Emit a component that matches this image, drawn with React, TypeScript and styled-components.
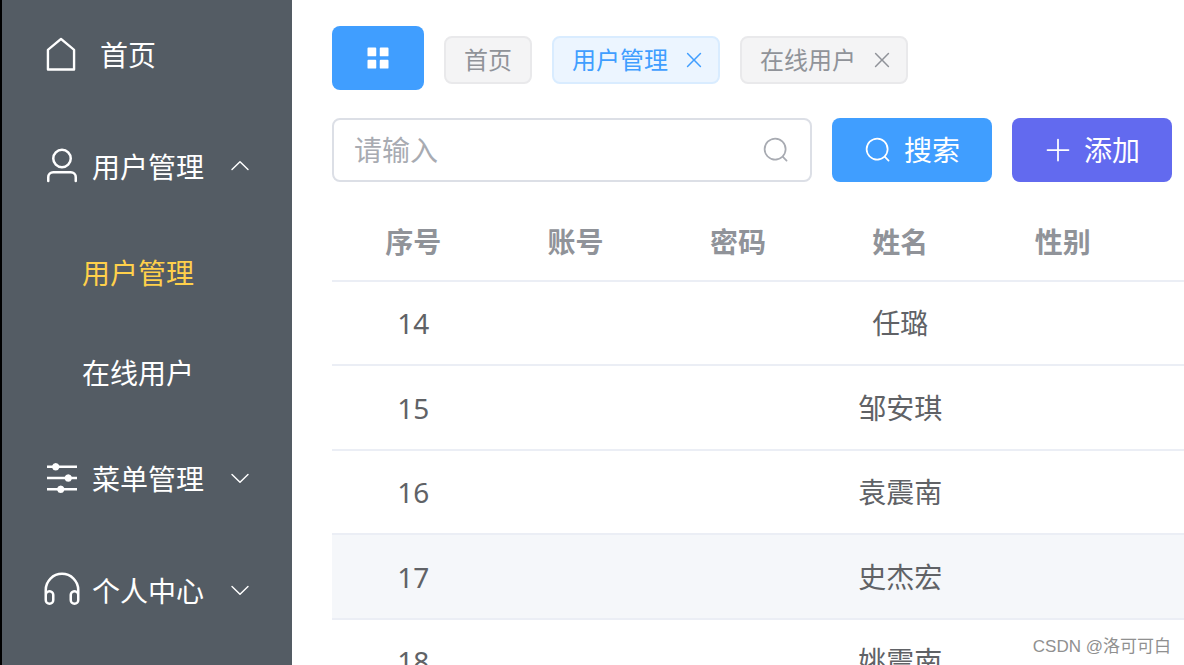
import React from "react";
import styled, { createGlobalStyle } from "styled-components";

const GlobalStyle = createGlobalStyle`
  *, *::before, *::after { box-sizing: border-box; }
  body {
    margin: 0;
    background: #fff;
    color: #606266;
    font-family: "Noto Sans", "Noto Sans CJK SC", sans-serif;
    font-size: 28px;
    line-height: 40px;
  }
  button, input { font: inherit; }
`;

const paths = {
  house:
    "M192 413.952V896h640V413.952L512 147.328 192 413.952zM139.52 374.4l352-293.312a32 32 0 0 1 40.96 0l352 293.312A32 32 0 0 1 896 398.976V928a32 32 0 0 1-32 32H160a32 32 0 0 1-32-32V398.976a32 32 0 0 1 11.52-24.576z",
  user:
    "M512 512a192 192 0 1 0 0-384 192 192 0 0 0 0 384zm0 64a256 256 0 1 1 0-512 256 256 0 0 1 0 512zm320 320v-96a96 96 0 0 0-96-96H288a96 96 0 0 0-96 96v96a32 32 0 1 1-64 0v-96a160 160 0 0 1 160-160h448a160 160 0 0 1 160 160v96a32 32 0 1 1-64 0z",
  operation:
    "M389.44 768a96.064 96.064 0 0 1 181.12 0H896v64H570.56a96.064 96.064 0 0 1-181.12 0H128v-64h261.44zm192-288a96.064 96.064 0 0 1 181.12 0H896v64H762.56a96.064 96.064 0 0 1-181.12 0H128v-64h453.44zm-320-288a96.064 96.064 0 0 1 181.12 0H896v64H442.56a96.064 96.064 0 0 1-181.12 0H128v-64h133.44z",
  headset:
    "M896 529.152V512a384 384 0 1 0-768 0v17.152A128 128 0 0 1 320 640v128a128 128 0 1 1-256 0V512a448 448 0 1 1 896 0v256a128 128 0 1 1-256 0V640a128 128 0 0 1 192-110.848zM896 640a64 64 0 0 0-128 0v128a64 64 0 0 0 128 0V640zm-768 0v128a64 64 0 0 0 128 0V640a64 64 0 1 0-128 0z",
  arrowDown:
    "M831.872 340.864 512 652.672 192.128 340.864a30.592 30.592 0 0 0-42.752 0 29.12 29.12 0 0 0 0 41.6L489.664 714.24a32 32 0 0 0 44.672 0l340.288-331.712a29.12 29.12 0 0 0 0-41.728 30.592 30.592 0 0 0-42.752 0z",
  menu:
    "M160 448a32 32 0 0 1-32-32V160a32 32 0 0 1 32-32h256a32 32 0 0 1 32 32v256a32 32 0 0 1-32 32H160zm448 0a32 32 0 0 1-32-32V160a32 32 0 0 1 32-32h256a32 32 0 0 1 32 32v256a32 32 0 0 1-32 32H608zM160 896a32 32 0 0 1-32-32V608a32 32 0 0 1 32-32h256a32 32 0 0 1 32 32v256a32 32 0 0 1-32 32H160zm448 0a32 32 0 0 1-32-32V608a32 32 0 0 1 32-32h256a32 32 0 0 1 32 32v256a32 32 0 0 1-32 32H608z",
  close:
    "M764.288 214.592 512 466.88 259.712 214.592a31.936 31.936 0 0 0-45.12 45.12L466.752 512 214.528 764.224a31.936 31.936 0 1 0 45.12 45.184L512 557.184l252.288 252.288a31.936 31.936 0 0 0 45.12-45.12L557.12 512.064l252.288-252.352a31.936 31.936 0 1 0-45.12-45.12z",
  search:
    "m795.904 750.72 124.992 124.928a32 32 0 0 1-45.248 45.248L750.656 795.904a416 416 0 1 1 45.248-45.248zM480 832a352 352 0 1 0 0-704 352 352 0 0 0 0 704z",
  plus:
    "M480 480V128a32 32 0 0 1 64 0v352h352a32 32 0 1 1 0 64H544v352a32 32 0 1 1-64 0V544H128a32 32 0 0 1 0-64h352z",
};

type IconName = keyof typeof paths;

const IconSvg = styled.svg<{ $flip?: boolean }>`
  display: block;
  flex: none;
  fill: currentColor;
  transform: ${(p) => (p.$flip ? "rotate(180deg)" : "none")};
`;

function Icon({ name, size, flip }: { name: IconName; size: number; flip?: boolean }) {
  return (
    <IconSvg viewBox="0 0 1024 1024" width={size} height={size} $flip={flip} aria-hidden="true">
      <path d={paths[name]} />
    </IconSvg>
  );
}

const Shell = styled.div`
  display: flex;
  height: 100vh;
  overflow: hidden;
`;

const Sidebar = styled.nav`
  flex: none;
  width: 292px;
  border-left: 2px solid #000;
  background: #545c64;
  color: #fff;
`;

const HomeLink = styled.a`
  display: flex;
  align-items: center;
  gap: 20px;
  height: 112px;
  padding: 0 40px 4px;
  color: #fff;
  text-decoration: none;
`;

const MenuTitle = styled.button`
  display: flex;
  align-items: center;
  gap: 10px;
  width: 100%;
  height: 112px;
  padding: 0 40px 4px;
  border: 0;
  background: none;
  color: #fff;
  text-align: left;
  cursor: pointer;
`;

const MenuLabel = styled.span`
  flex: 1;
  padding-top: 2px;
  white-space: nowrap;
`;

const SubLink = styled.a<{ $active?: boolean }>`
  display: flex;
  align-items: center;
  height: 100px;
  padding: 0 40px 2px 80px;
  color: ${(p) => (p.$active ? "#ffd04b" : "#fff")};
  text-decoration: none;
`;

const Main = styled.main`
  flex: 1;
  min-width: 0;
  padding: 26px 0 0 40px;
`;

const TagBar = styled.div`
  display: flex;
  align-items: flex-start;
  gap: 20px;
  margin-bottom: 28px;
`;

const Tags = styled.div`
  display: flex;
  gap: 20px;
  padding-top: 10px;
`;

const Tag = styled.span<{ $active?: boolean; $closable?: boolean }>`
  display: flex;
  align-items: center;
  gap: 14px;
  height: 48px;
  padding: 0 ${(p) => (p.$closable ? 12 : 18)}px 0 18px;
  border: 2px solid ${(p) => (p.$active ? "#d9ecff" : "#e9e9eb")};
  border-radius: 8px;
  background: ${(p) => (p.$active ? "#ecf5ff" : "#f4f4f5")};
  color: ${(p) => (p.$active ? "#409eff" : "#909399")};
  font-size: 24px;
  white-space: nowrap;
`;

const TagClose = styled.button`
  padding: 0;
  border: 0;
  background: none;
  color: inherit;
  cursor: pointer;
`;

const Button = styled.button<{ $color: string }>`
  display: flex;
  flex: none;
  align-items: center;
  gap: 12px;
  height: 64px;
  padding: 0 32px;
  border: 0;
  border-radius: 8px;
  background: ${(p) => p.$color};
  color: #fff;
  cursor: pointer;
`;

const SearchRow = styled.form`
  display: flex;
  gap: 20px;
  margin-bottom: 20px;
  padding-right: 12px;
`;

const SearchBox = styled.label`
  display: flex;
  flex: 1;
  align-items: center;
  min-width: 0;
  height: 64px;
  padding: 0 20px;
  border: 2px solid #dcdfe6;
  border-radius: 8px;
  color: #a8abb2;
`;

const SearchInput = styled.input`
  flex: 1;
  min-width: 0;
  padding: 0;
  border: 0;
  outline: 0;
  background: none;
  color: #606266;
  &::placeholder { color: #a8abb2; opacity: 1; }
`;

const Table = styled.table`
  width: 100%;
  border-collapse: separate;
  border-spacing: 0;
  table-layout: fixed;
  text-align: center;
`;

const HeadCell = styled.th`
  height: 80px;
  padding: 2px 0 0;
  border-bottom: 2px solid #ebeef5;
  color: #909399;
  font-weight: 700;
`;

const EdgeCol = styled.col`
  width: 40px;
`;

const Row = styled.tr<{ $hover?: boolean }>`
  height: 84px;
  background: ${(p) => (p.$hover ? "#f5f7fa" : "#fff")};
  &:nth-child(even) { height: 85px; }
`;

const Cell = styled.td`
  padding: 0;
  border-bottom: 2px solid #ebeef5;
`;

const Watermark = styled.div`
  position: absolute;
  right: 13px;
  bottom: 6px;
  color: #909090;
  font-family: "Liberation Sans", "Noto Sans CJK SC", sans-serif;
  font-size: 17px;
  line-height: 24px;
  text-shadow: 0 0 1px #fff;
`;

const columns = ["序号", "账号", "密码", "姓名", "性别"];

const users = [
  { id: 14, name: "任璐" },
  { id: 15, name: "邹安琪" },
  { id: 16, name: "袁震南" },
  { id: 17, name: "史杰宏" },
  { id: 18, name: "姚震南" },
];

const tags = [
  { label: "首页" },
  { label: "用户管理", active: true, closable: true },
  { label: "在线用户", closable: true },
];

function MenuGroup({ icon, label, open }: { icon: IconName; label: string; open?: boolean }) {
  return (
    <MenuTitle type="button" aria-expanded={!!open}>
      <Icon name={icon} size={40} />
      <MenuLabel>{label}</MenuLabel>
      <Icon name="arrowDown" size={24} flip={open} />
    </MenuTitle>
  );
}

export default function App() {
  return (
    <>
      <GlobalStyle />
      <Shell>
        <Sidebar>
          <HomeLink href="#home">
            <Icon name="house" size={38} />
            <MenuLabel>首页</MenuLabel>
          </HomeLink>
          <MenuGroup icon="user" label="用户管理" open />
          <SubLink href="#users" $active>用户管理</SubLink>
          <SubLink href="#online">在线用户</SubLink>
          <MenuGroup icon="operation" label="菜单管理" />
          <MenuGroup icon="headset" label="个人中心" />
        </Sidebar>
        <Main>
          <TagBar>
            <Button type="button" $color="#409eff" aria-label="菜单">
              <Icon name="menu" size={28} />
            </Button>
            <Tags>
              {tags.map((tag) => (
                <Tag key={tag.label} $active={tag.active} $closable={tag.closable}>
                  {tag.label}
                  {tag.closable && (
                    <TagClose type="button" aria-label={`关闭${tag.label}`}>
                      <Icon name="close" size={24} />
                    </TagClose>
                  )}
                </Tag>
              ))}
            </Tags>
          </TagBar>
          <SearchRow onSubmit={(e) => e.preventDefault()}>
            <SearchBox>
              <SearchInput type="text" placeholder="请输入" aria-label="请输入" />
              <Icon name="search" size={28} />
            </SearchBox>
            <Button type="submit" $color="#409eff">
              <Icon name="search" size={28} />
              搜索
            </Button>
            <Button type="button" $color="#626aef">
              <Icon name="plus" size={28} />
              添加
            </Button>
          </SearchRow>
          <Table>
            <colgroup>
              {columns.map((c) => (
                <col key={c} />
              ))}
              <EdgeCol />
            </colgroup>
            <thead>
              <tr>
                {columns.map((c) => (
                  <HeadCell key={c} scope="col">{c}</HeadCell>
                ))}
                <HeadCell as="td" />
              </tr>
            </thead>
            <tbody>
              {users.map((u) => (
                <Row key={u.id} $hover={u.id === 17}>
                  <Cell>{u.id}</Cell>
                  <Cell />
                  <Cell />
                  <Cell>{u.name}</Cell>
                  <Cell />
                  <Cell />
                </Row>
              ))}
            </tbody>
          </Table>
        </Main>
      </Shell>
      <Watermark>CSDN @洛可可白</Watermark>
    </>
  );
}
